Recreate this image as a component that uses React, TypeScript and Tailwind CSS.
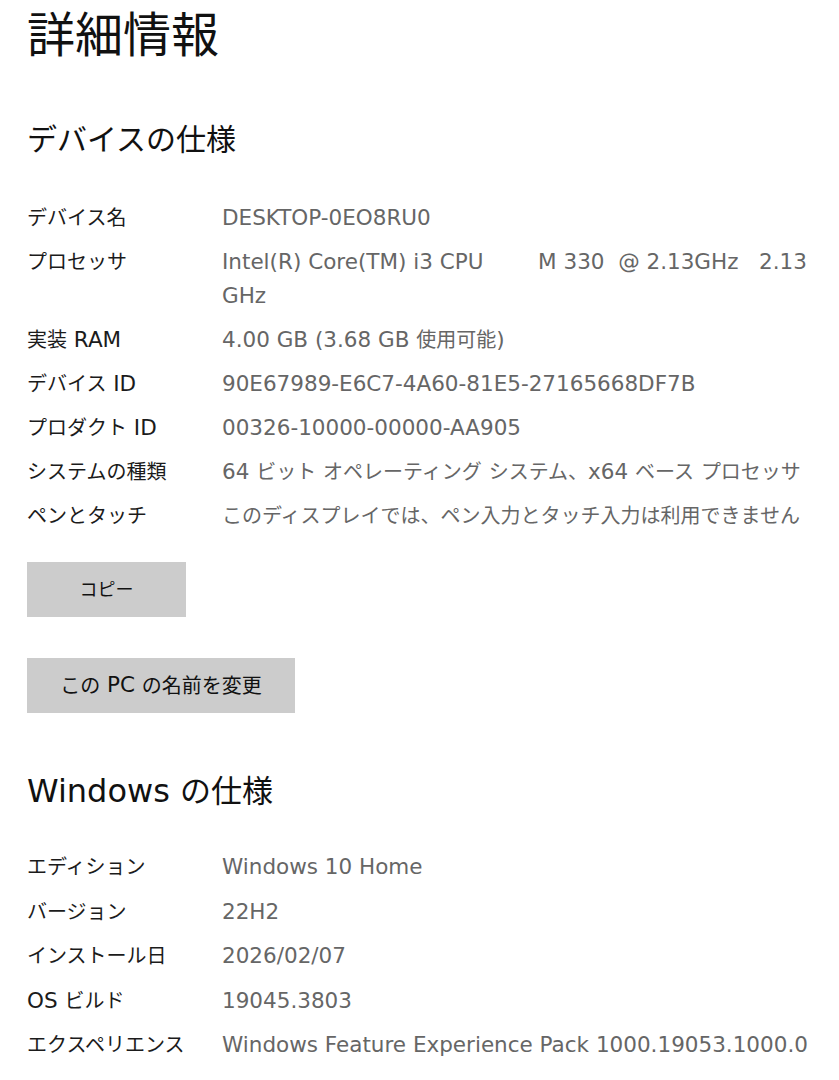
import React from "react";

const font = {
  fontFamily: '"DejaVu Sans", "Noto Sans CJK JP", sans-serif',
};

type Row = { label: string; value: string };

const deviceRows: Row[] = [
  { label: "デバイス名", value: "DESKTOP-0EO8RU0" },
  {
    label: "プロセッサ",
    value: "Intel(R) Core(TM) i3 CPU        M 330  @ 2.13GHz   2.13\nGHz",
  },
  { label: "実装 RAM", value: "4.00 GB (3.68 GB 使用可能)" },
  { label: "デバイス ID", value: "90E67989-E6C7-4A60-81E5-27165668DF7B" },
  { label: "プロダクト ID", value: "00326-10000-00000-AA905" },
  { label: "システムの種類", value: "64 ビット オペレーティング システム、x64 ベース プロセッサ" },
  { label: "ペンとタッチ", value: "このディスプレイでは、ペン入力とタッチ入力は利用できません" },
];

const windowsRows: Row[] = [
  { label: "エディション", value: "Windows 10 Home" },
  { label: "バージョン", value: "22H2" },
  { label: "インストール日", value: "2026/02/07" },
  { label: "OS ビルド", value: "19045.3803" },
  { label: "エクスペリエンス", value: "Windows Feature Experience Pack 1000.19053.1000.0" },
];

// Latin runs are set a touch larger than the Japanese text around them,
// the way the system UI font pairs its Latin and kana glyphs.
function Mixed({ text, latin }: { text: string; latin: string }) {
  const parts = text.split(/([\x00-\x7F]+)/).filter((p) => p.length > 0);
  return (
    <>
      {parts.map((p, i) =>
        /^[\x00-\x7F]+$/.test(p) ? (
          <span key={i} className={latin}>
            {p}
          </span>
        ) : (
          <span key={i}>{p}</span>
        )
      )}
    </>
  );
}

function SpecList({ rows, gap }: { rows: Row[]; gap: string }) {
  return (
    <div className={`flex flex-col ${gap}`}>
      {rows.map((r) => (
        <div key={r.label} className="grid grid-cols-[195px_1fr] text-[20px] leading-[34px]">
          <div className="text-[#1b1b1b] whitespace-pre">
            <Mixed text={r.label} latin="text-[21.5px]" />
          </div>
          <div className="text-[#666666] whitespace-pre-wrap">
            <Mixed text={r.value} latin="text-[21.5px]" />
          </div>
        </div>
      ))}
    </div>
  );
}

function GrayButton({ children, width }: { children: React.ReactNode; width: string }) {
  return (
    <button
      className={`${width} h-[55px] bg-[#cccccc] text-[20px] text-[#111111] flex items-center justify-center whitespace-pre`}
      style={font}
    >
      {children}
    </button>
  );
}

export default function App() {
  return (
    <div className="min-h-[1080px] w-[839px] bg-white pl-[27px] pr-[20px] pt-[6px]" style={font}>
      <h1 className="text-[48px] leading-[58px] text-[#111111] font-normal">詳細情報</h1>

      <h2 className="mt-[56px] text-[30px] leading-[40px] text-[#111111] font-normal">デバイスの仕様</h2>

      <div className="mt-[41px]">
        <SpecList rows={deviceRows} gap="gap-[10px]" />
      </div>

      <div className="mt-[29px] flex flex-col gap-[41px]">
        <GrayButton width="w-[159px]">
          <span className="text-[18px]">コピー</span>
        </GrayButton>
        <GrayButton width="w-[268px]">
          <Mixed text="この PC の名前を変更" latin="text-[21.5px]" />
        </GrayButton>
      </div>

      <h2 className="mt-[58px] text-[31px] leading-[40px] text-[#111111] font-normal">
        <Mixed text="Windows の仕様" latin="text-[32px]" />
      </h2>

      <div className="mt-[39px]">
        <SpecList rows={windowsRows} gap="gap-[10.5px]" />
      </div>
    </div>
  );
}
